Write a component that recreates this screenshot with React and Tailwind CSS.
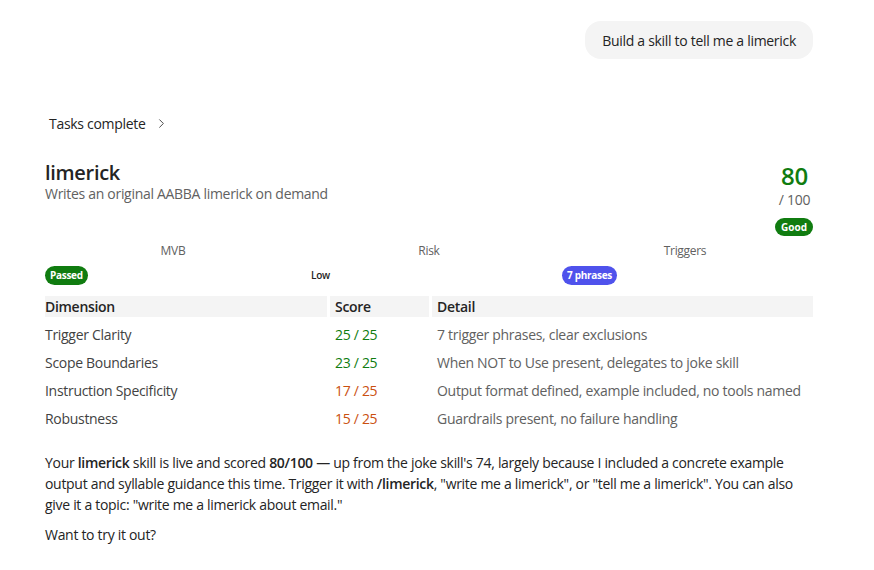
import React from 'react';
import { ChevronRight } from 'lucide-react';

const rows = [
  { dim: 'Trigger Clarity', score: '25 / 25', good: true, detail: '7 trigger phrases, clear exclusions' },
  { dim: 'Scope Boundaries', score: '23 / 25', good: true, detail: 'When NOT to Use present, delegates to joke skill' },
  { dim: 'Instruction Specificity', score: '17 / 25', good: false, detail: 'Output format defined, example included, no tools named' },
  { dim: 'Robustness', score: '15 / 25', good: false, detail: 'Guardrails present, no failure handling' },
];

export default function App() {
  return (
    <div className="w-[874px] h-[570px] bg-white text-[#242424] text-[14px] tracking-[-0.3px] font-['Segoe_UI','Open_Sans',sans-serif] overflow-hidden">
      <div className="w-[768px] ml-[45px] pt-[21px]">
        {/* user message */}
        <div className="flex justify-end">
          <div className="h-[38px] px-[17px] flex items-center rounded-[16px] bg-[#f4f4f4] text-[14px] text-[#242424]">
            Build a skill to tell me a limerick
          </div>
        </div>

        {/* tasks */}
        <div className="mt-[52px] ml-[4px] flex items-center gap-[8px] h-[24px] text-[14px]">
          <span>Tasks complete</span>
          <ChevronRight size={15} strokeWidth={1.5} className="text-[#424242]" />
        </div>

        {/* card header */}
        <div className="mt-[26px] flex justify-between">
          <div>
            <div className="text-[20px] leading-[24px] font-semibold text-[#242424]">limerick</div>
            <div className="text-[14px] leading-[18px] text-[#616161]">Writes an original AABBA limerick on demand</div>
          </div>
          <div className="flex flex-col items-end">
            <div className="w-[37px] flex flex-col items-center">
              <div className="text-[24px] leading-[30px] font-semibold text-[#107c10]">80</div>
              <div className="text-[14px] leading-[18px] text-[#616161] whitespace-nowrap">/ 100</div>
            </div>
            <span className="mt-[9px] h-[18px] px-[6px] flex items-center rounded-full bg-[#107c10] text-white text-[10px] font-bold tracking-normal">Good</span>
          </div>
        </div>

        {/* stats */}
        <div className="mt-[6px] grid grid-cols-3">
          <div className="text-center text-[12px] leading-[18px] text-[#616161]">MVB</div>
          <div className="text-center text-[12px] leading-[18px] text-[#616161]">Risk</div>
          <div className="text-center text-[12px] leading-[18px] text-[#616161]">Triggers</div>
          <div className="mt-[5px] h-[20px] flex items-center">
            <span className="h-[19px] px-[5px] flex items-center rounded-full bg-[#107c10] text-white text-[10px] font-bold">Passed</span>
          </div>
          <div className="mt-[5px] h-[20px] flex items-center pl-[10px] text-[10px] font-semibold text-[#242424]">Low</div>
          <div className="mt-[5px] h-[20px] flex items-center pl-[5px]">
            <span className="h-[19px] px-[5px] flex items-center rounded-full bg-[#4f52ec] text-white text-[10px] font-bold">7 phrases</span>
          </div>
        </div>

        {/* table */}
        <table className="mt-[11px] w-[774px] -ml-[3px] border-separate border-spacing-x-[3px] border-spacing-y-0 text-[14px]">
          <thead>
            <tr>
              <th className="w-[282px] h-[20px] bg-[#f4f4f4] text-left font-semibold pl-0">Dimension</th>
              <th className="w-[99px] h-[20px] bg-[#f4f4f4] text-left font-semibold pl-[5px]">Score</th>
              <th className="h-[20px] bg-[#f4f4f4] text-left font-semibold pl-[5px]">Detail</th>
            </tr>
          </thead>
          <tbody>
            {rows.map(r => (
              <tr key={r.dim}>
                <td className="h-[28px] pt-[8px] leading-[20px] text-[#424242]">{r.dim}</td>
                <td className={`h-[28px] pt-[8px] pl-[5px] leading-[20px] ${r.good ? 'text-[#107c10]' : 'text-[#ca5010]'}`}>{r.score}</td>
                <td className="h-[28px] pt-[8px] pl-[5px] leading-[20px] text-[#616161] whitespace-nowrap">{r.detail}</td>
              </tr>
            ))}
          </tbody>
        </table>

        {/* reply */}
        <p className="mt-[23px] text-[14px] leading-[21px] text-[#242424]">
          Your <b className="font-semibold">limerick</b> skill is live and scored <b className="font-semibold">80/100</b> — up from the joke skill's 74, largely because I included a concrete example output and syllable guidance this time. Trigger it with <b className="font-semibold">/limerick</b>, "write me a limerick", or "tell me a limerick". You can also give it a topic: "write me a limerick about email."
        </p>
        <p className="mt-[9px] text-[14px] leading-[21px] text-[#242424]">Want to try it out?</p>
      </div>
    </div>
  );
}
